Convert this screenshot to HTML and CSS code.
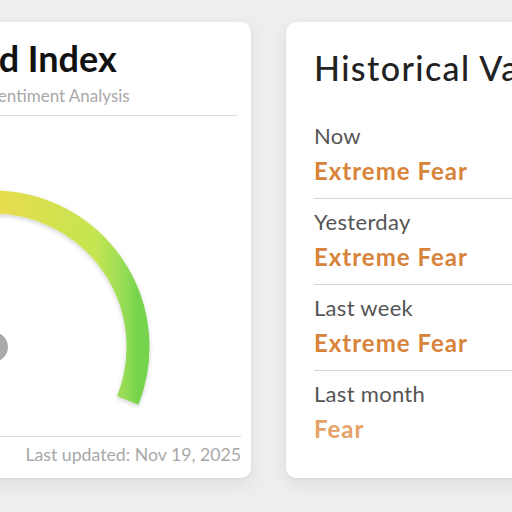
FILE: index.html
```html
<!DOCTYPE html>
<html lang="en">
<head>
<meta charset="utf-8">
<title>Fear &amp; Greed Index</title>
<link rel="stylesheet" href="styles.css">
</head>
<body>
<div class="page">
  <section class="card gauge-card">
    <header class="gauge-head">
      <h1 class="gauge-title">Fear &amp; Greed Index</h1>
      <p class="gauge-sub">Market Sentiment Analysis</p>
    </header>
    <div class="gauge-body">
      <svg class="gauge-svg" width="428" height="322" viewBox="0 0 428 322">
        <defs>
          <linearGradient id="arcGrad" gradientUnits="userSpaceOnUse" x1="49" y1="0" x2="329" y2="0">
            <stop offset="0" stop-color="#e8503c"/>
            <stop offset="0.25" stop-color="#f09a3e"/>
            <stop offset="0.5" stop-color="#e8dc4e"/>
            <stop offset="0.85" stop-color="#c4e551"/>
            <stop offset="0.95" stop-color="#98dc57"/>
            <stop offset="1" stop-color="#76d34d"/>
          </linearGradient>
          <filter id="arcShadow" x="-20%" y="-20%" width="140%" height="140%">
            <feDropShadow dx="0" dy="2" stdDeviation="2" flood-color="#000" flood-opacity="0.18"/>
          </filter>
        </defs>
        <path d="M 49.2 284.4 A 145 145 0 1 1 318.8 284.4" fill="none" stroke="url(#arcGrad)" stroke-width="23" filter="url(#arcShadow)"/>
        <line x1="184" y1="231" x2="76" y2="190" stroke="#9a9a9a" stroke-width="5" stroke-linecap="round"/>
        <circle cx="184" cy="231" r="15" fill="#a9a9a9"/>
        <circle cx="184" cy="231" r="6" fill="#bdbdbd"/>
      </svg>
    </div>
    <footer class="gauge-foot">Last updated: Nov 19, 2025</footer>
  </section>
  <section class="card history-card">
    <h2 class="history-title">Historical Values</h2>
    <ul class="history-list">
      <li class="history-row">
        <span class="row-label">Now</span>
        <span class="row-value">Extreme Fear</span>
      </li>
      <li class="history-row">
        <span class="row-label">Yesterday</span>
        <span class="row-value">Extreme Fear</span>
      </li>
      <li class="history-row">
        <span class="row-label">Last week</span>
        <span class="row-value">Extreme Fear</span>
      </li>
      <li class="history-row">
        <span class="row-label">Last month</span>
        <span class="row-value value-fear">Fear</span>
      </li>
    </ul>
  </section>
</div>
</body>
</html>
```

FILE: styles.css
```css
* { box-sizing: border-box; }
html, body {
  margin: 0;
  padding: 0;
  background: #eeeeee;
  overflow: hidden;
  width: 512px;
  height: 512px;
}
body {
  font-family: Lato, "Open Sans", sans-serif;
}
.page {
  display: flex;
  align-items: flex-start;
  gap: 35px;
  padding-top: 22px;
  margin-left: -205px;
}
.card {
  background: #ffffff;
  border-radius: 10px;
  box-shadow: 0 6px 18px rgba(0, 0, 0, 0.07), 0 1px 3px rgba(0, 0, 0, 0.05);
  flex: 0 0 auto;
}
.gauge-card {
  width: 456px;
  height: 456px;
  padding: 15px 14px 0;
  display: flex;
  flex-direction: column;
}
.gauge-head {
  padding-bottom: 9px;
  border-bottom: 1px solid #d9d9d9;
}
.gauge-title {
  margin: 0;
  font-size: 36px;
  line-height: 43px;
  font-weight: 700;
  color: #111111;
}
.gauge-sub {
  margin: 6px 0 0;
  padding-left: 122px;
  font-size: 17px;
  line-height: 20px;
  color: #a8a8a8;
}
.gauge-body {
  height: 320px;
}
.gauge-svg {
  display: block;
}
.gauge-foot {
  border-top: 1px solid #d9d9d9;
  padding-top: 7px;
  text-align: right;
  font-size: 17.7px;
  line-height: 21px;
  color: #a8a8a8;
  margin-right: -4px;
}
.history-card {
  width: 320px;
  height: 456px;
  padding: 28px 0 0 28px;
}
.history-title {
  margin: 0;
  font-size: 34px;
  line-height: 36px;
  font-weight: 500;
  letter-spacing: 1.4px;
  color: #222222;
}
.history-list {
  list-style: none;
  margin: 27px 0 0;
  padding: 0;
}
.history-row {
  display: flex;
  flex-direction: column;
  padding: 10px 0 13px;
  border-bottom: 1px solid #d6d6d6;
}
.history-row:last-child {
  border-bottom: none;
}
.row-label {
  font-size: 22px;
  line-height: 25px;
  letter-spacing: 0.3px;
  color: #555555;
}
.row-value {
  margin-top: 9px;
  font-size: 24px;
  line-height: 28px;
  font-weight: 700;
  letter-spacing: 1px;
  color: #d8833a;
}
.value-fear {
  color: #e6a266;
}
```
